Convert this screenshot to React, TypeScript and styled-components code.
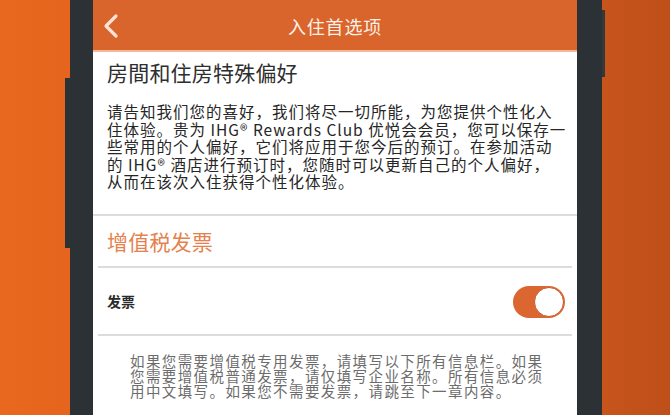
import styled, { createGlobalStyle } from 'styled-components';

const GlobalStyle = createGlobalStyle`
    html, body {
        margin: 0;
        padding: 0;
        width: 670px;
        height: 415px;
        overflow: hidden;
    }
    body {
        font-family: "Noto Sans CJK SC", "Noto Sans", sans-serif;
    }
`

const introLines = [
    '请告知我们您的喜好，我们将尽一切所能，为您提供个性化入',
    '住体验。贵为 IHG® Rewards Club 优悦会会员，您可以保存一',
    '些常用的个人偏好，它们将应用于您今后的预订。在参加活动',
    '的 IHG® 酒店进行预订时，您随时可以更新自己的个人偏好，',
    '从而在该次入住获得个性化体验。',
]

const noteLines = [
    '如果您需要增值税专用发票，请填写以下所有信息栏。如果',
    '您需要增值税普通发票，请仅填写企业名称。所有信息必须',
    '用中文填写。如果您不需要发票，请跳至下一章内容。',
]

const App = () => {
    return (
        <>
            <GlobalStyle />
            <Stage>
                <Phone>
                    <Screen>
                        <Header>
                            <BackButton aria-label="back">
                                <svg width="18" height="26" viewBox="0 0 18 26">
                                    <path d="M14 3 L4 13 L14 23" fill="none" stroke="#fbe2d2" strokeWidth="3.2" strokeLinecap="round" strokeLinejoin="round" />
                                </svg>
                            </BackButton>
                            <HeaderTitle>入住首选项</HeaderTitle>
                        </Header>

                        <Intro>
                            <Heading>房間和住房特殊偏好</Heading>
                            <Paragraph>
                                {introLines.map((line, i) => (
                                    <Line key={i}>{line}</Line>
                                ))}
                            </Paragraph>
                        </Intro>

                        <Divider />
                        <SectionTitle>增值税发票</SectionTitle>
                        <Divider inset />

                        <SettingRow>
                            <SettingLabel>发票</SettingLabel>
                            <Toggle role="switch" aria-checked="true">
                                <Knob />
                            </Toggle>
                        </SettingRow>

                        <Divider inset />

                        <Note>
                            {noteLines.map((line, i) => (
                                <Line key={i}>{line}</Line>
                            ))}
                        </Note>
                    </Screen>
                </Phone>
            </Stage>
        </>
    )
}

const Stage = styled.div`
    display: flex;
    width: 670px;
    height: 415px;
    overflow: hidden;
    background: linear-gradient(90deg, #e9681f 0, #e5651e 65px, #c6541b 605px, #bf4f19 100%);
`

const Phone = styled.div`
    position: relative;
    display: flex;
    margin-left: 70px;
    width: 532px;
    height: 100%;
    padding: 0 25px 0 23px;
    box-sizing: border-box;
    background: #2b3134;

    &::before {
        content: '';
        position: absolute;
        left: -5px;
        top: 78px;
        width: 5px;
        height: 170px;
        background: #2b3134;
    }

    &::after {
        content: '';
        position: absolute;
        right: -3px;
        top: 10px;
        width: 3px;
        height: 67px;
        background: #33383a;
    }
`

const Screen = styled.div`
    display: flex;
    flex-direction: column;
    flex: 1;
    background: #ffffff;
    overflow: hidden;
`

const Header = styled.div`
    display: flex;
    align-items: center;
    justify-content: center;
    position: relative;
    flex-shrink: 0;
    height: 50px;
    background: #d9642c;
    border-bottom: 2px solid #f3b896;
`

const BackButton = styled.div`
    position: absolute;
    left: 9px;
    top: 13px;
    display: flex;
`

const HeaderTitle = styled.div`
    color: #fdf0e8;
    font-size: 18px;
    letter-spacing: 0.8px;
    line-height: 20px;
    margin-top: 2px;
`

const Intro = styled.div`
    display: flex;
    flex-direction: column;
    padding: 8px 14px 0 14px;
`

const Heading = styled.div`
    color: #2e2e2e;
    font-size: 21px;
    line-height: 24px;
    letter-spacing: 0.2px;
`

const Paragraph = styled.div`
    margin-top: 19px;
    margin-bottom: 23px;
    color: #262626;
    font-size: 15.5px;
    letter-spacing: 1px;
    line-height: 17.5px;
`

const Line = styled.div`
    white-space: nowrap;
`

const Divider = styled.div<{ inset?: boolean }>`
    flex-shrink: 0;
    height: 2px;
    margin: 0 ${(p) => (p.inset ? '5px' : '0')};
    background: #dcdcdc;
`

const SectionTitle = styled.div`
    display: flex;
    align-items: center;
    height: 50px;
    padding-left: 14px;
    color: #e6814c;
    font-size: 21px;
    letter-spacing: 0.2px;
`

const SettingRow = styled.div`
    display: flex;
    align-items: center;
    justify-content: space-between;
    height: 66px;
    padding: 0 12px 0 14px;
`

const SettingLabel = styled.div`
    color: #2a2a2a;
    font-size: 14px;
    font-weight: 700;
    margin-top: 1px;
`

const Toggle = styled.div`
    display: flex;
    align-items: center;
    justify-content: flex-end;
    width: 52px;
    height: 32px;
    margin-top: 2px;
    border-radius: 16px;
    background: #db6630;
    box-sizing: border-box;
`

const Knob = styled.div`
    width: 30px;
    height: 30px;
    margin-right: 1px;
    border-radius: 50%;
    background: #ffffff;
    border: 1.5px solid #c85a2a;
    box-sizing: border-box;
`

const Note = styled.div`
    margin-top: 17px;
    padding-left: 37px;
    color: #6c6c6c;
    font-size: 14.5px;
    letter-spacing: 1.4px;
    line-height: 15px;
`

export default App;
